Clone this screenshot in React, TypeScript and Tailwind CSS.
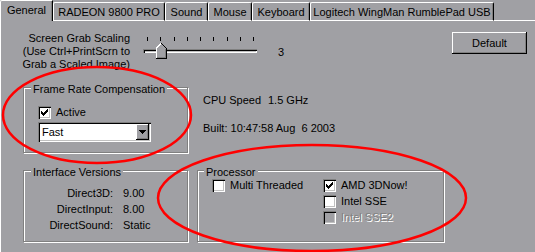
import React from "react";

const tabs = [
  { label: "General", width: "w-[53px]", active: true },
  { label: "RADEON 9800 PRO", width: "w-[112px]", active: false },
  { label: "Sound", width: "w-[43px]", active: false },
  { label: "Mouse", width: "w-[44px]", active: false },
  { label: "Keyboard", width: "w-[58px]", active: false },
  { label: "Logitech WingMan RumblePad USB", width: "w-[184px]", active: false },
];

const versions = [
  { name: "Direct3D:", value: "9.00" },
  { name: "DirectInput:", value: "8.00" },
  { name: "DirectSound:", value: "Static" },
];

function CheckMark() {
  // classic 7px wide tick, 3px columns
  const cols = [5, 6, 7, 6, 5, 4, 3];
  return (
    <svg width="13" height="13" viewBox="0 0 13 13" shapeRendering="crispEdges" className="absolute inset-0">
      {cols.map((top, i) => (
        <rect key={i} x={3 + i} y={top} width="1" height="3" fill="#000" />
      ))}
    </svg>
  );
}

function CheckBox({ checked = false, disabled = false }: { checked?: boolean; disabled?: boolean }) {
  return (
    <span
      className={
        "relative block w-[13px] h-[13px] shrink-0 shadow-[inset_1px_1px_0_#808080,inset_2px_2px_0_#000,inset_-1px_-1px_0_#fff,inset_-2px_-2px_0_#c0c0c0] " +
        (disabled ? "bg-[#a0a0a4]" : "bg-white")
      }
    >
      {checked && <CheckMark />}
    </span>
  );
}

function CheckRow({ label, checked, disabled }: { label: string; checked?: boolean; disabled?: boolean }) {
  return (
    <div className="flex items-center gap-[5px] h-[13px]">
      <CheckBox checked={checked} disabled={disabled} />
      <span className={disabled ? "text-[#808080] [text-shadow:1px_1px_0_#fff]" : ""}>{label}</span>
    </div>
  );
}

function GroupBox({
  title,
  className,
  titleLeft,
  children,
}: {
  title: string;
  className: string;
  titleLeft: string;
  children?: React.ReactNode;
}) {
  return (
    <div className={"relative border border-[#808080] shadow-[1px_1px_0_#fff,inset_1px_1px_0_#fff] shrink-0 " + className}>
      <span className={"absolute -top-[5px] px-[2px] bg-[#a0a0a4] whitespace-nowrap " + titleLeft}>{title}</span>
      {children}
    </div>
  );
}

function Slider() {
  return (
    <div className="relative w-[115px] h-[27px] ml-[13px] shrink-0">
      <div className="absolute left-0 right-0 top-[5px] flex justify-between px-[4px]">
        {Array.from({ length: 9 }).map((_, i) => (
          <span key={i} className="block w-px h-[4px] bg-black" />
        ))}
      </div>
      <div className="absolute left-0 top-[17px] w-[114px] h-[4px] bg-[#a0a0a4] shadow-[inset_1px_1px_0_#808080,inset_2px_2px_0_#000,inset_-1px_-1px_0_#fff,inset_-2px_-2px_0_#c0c0c0]" />
      <svg width="11" height="16" viewBox="0 0 11 16" shapeRendering="crispEdges" className="absolute left-[13px] top-[11px]">
        <path d="M5 0 L10 5 L10 15 L0 15 L0 5 Z" fill="#a0a0a4" />
        <polyline points="0.5,15 0.5,5 5,0.5" stroke="#fff" fill="none" />
        <polyline points="5.5,0.5 10.5,5.5 10.5,15.5 0,15.5" stroke="#000" fill="none" />
        <polyline points="9.5,6 9.5,14.5 1,14.5" stroke="#808080" fill="none" />
      </svg>
    </div>
  );
}

function ComboBox() {
  return (
    <div className="relative w-[113px] h-[20px] mt-[3px] bg-white shadow-[inset_1px_1px_0_#808080,inset_2px_2px_0_#000,inset_-1px_-1px_0_#fff,inset_-2px_-2px_0_#c0c0c0]">
      <span className="absolute left-[4px] top-[4px]">Fast</span>
      <div className="absolute right-[2px] top-[2px] w-[13px] h-[16px] bg-[#a0a0a4] shadow-[inset_-1px_-1px_0_#000,inset_1px_1px_0_#fff,inset_-2px_-2px_0_#808080] flex items-center justify-center">
        <svg width="7" height="4" viewBox="0 0 7 4" shapeRendering="crispEdges">
          <path d="M0 0 H7 V1 H6 V2 H5 V3 H4 V4 H3 V3 H2 V2 H1 V1 H0 Z" fill="#000" />
        </svg>
      </div>
    </div>
  );
}

export default function App() {
  return (
    <div className="relative w-[535px] h-[252px] overflow-hidden bg-[#a0a0a4] text-black text-[11px] leading-[13px] font-['Liberation_Sans',Arial,sans-serif]">
      {/* tab strip */}
      <div className="flex items-end h-[21px]">
        {tabs.map((t) =>
          t.active ? (
            <div
              key={t.label}
              className={"h-[21px] self-start border-l border-t border-white rounded-tl-[2px] border-r border-r-black shadow-[inset_-1px_0_0_#808080] text-center pt-[3px] shrink-0 " + t.width}
            >
              {t.label}
            </div>
          ) : (
            <div
              key={t.label}
              className={"h-[19px] border-l border-t border-b border-white border-r border-r-black rounded-tl-[2px] rounded-tr-[2px] shadow-[inset_-1px_0_0_#808080] text-center pt-[3px] whitespace-nowrap shrink-0 " + t.width}
            >
              {t.label}
            </div>
          )
        )}
        <div className="flex-1 h-px bg-white" />
      </div>

      {/* page */}
      <div className="h-[231px] border-l border-white flex flex-col">
        <div className="flex items-start mt-[11px]">
          <div className="w-[129px] text-right shrink-0">
            Screen Grab Scaling
            <br />
            (Use Ctrl+PrintScrn to
            <br />
            Grab a Scaled Image)
          </div>
          <Slider />
          <span className="ml-[20px] mt-[14px]">3</span>
          <button className="ml-auto mr-[8px] w-[75px] h-[22px] bg-[#a0a0a4] shadow-[inset_-1px_-1px_0_#000,inset_1px_1px_0_#fff,inset_-2px_-2px_0_#808080] text-[11px] leading-[13px]">
            Default
          </button>
        </div>

        <div className="flex items-start mt-[16px]">
          <GroupBox title="Frame Rate Compensation" className="ml-[22px] w-[165px] h-[66px]" titleLeft="left-[7px]">
            <div className="flex flex-col pl-[14px] pt-[18px]">
              <CheckRow label="Active" checked />
              <ComboBox />
            </div>
          </GroupBox>
          <div className="ml-[15px] mt-[7px] flex flex-col gap-[15px]">
            <div className="flex">
              <span className="w-[65px]">CPU Speed</span>
              <span>1.5 GHz</span>
            </div>
            <div className="whitespace-pre">Built: 10:47:58 Aug  6 2003</div>
          </div>
        </div>

        <div className="flex items-start mt-[17px]">
          <GroupBox title="Interface Versions" className="ml-[22px] w-[165px] h-[72px]" titleLeft="left-[7px]">
            <div className="grid grid-cols-[89px_auto] gap-x-[10px] gap-y-[3px] pt-[16px]">
              {versions.map((v) => (
                <React.Fragment key={v.name}>
                  <span className="text-right">{v.name}</span>
                  <span>{v.value}</span>
                </React.Fragment>
              ))}
            </div>
          </GroupBox>
          <GroupBox title="Processor" className="ml-[9px] w-[247px] h-[72px]" titleLeft="left-[6px]">
            <div className="flex pl-[14px] pt-[8px]">
              <div className="w-[111px]">
                <CheckRow label="Multi Threaded" />
              </div>
              <div className="flex flex-col gap-[3px]">
                <CheckRow label="AMD 3DNow!" checked />
                <CheckRow label="Intel SSE" />
                <CheckRow label="Intel SSE2" disabled />
              </div>
            </div>
          </GroupBox>
        </div>
      </div>

      {/* red hand-drawn annotations */}
      <svg className="absolute inset-0 pointer-events-none" width="535" height="252" viewBox="0 0 535 252">
        <ellipse cx="97" cy="115" rx="94" ry="48" fill="none" stroke="#ff0000" strokeWidth="2.5" />
        <ellipse cx="312" cy="198" rx="154" ry="53" fill="none" stroke="#ff0000" strokeWidth="2.5" />
      </svg>
    </div>
  );
}
